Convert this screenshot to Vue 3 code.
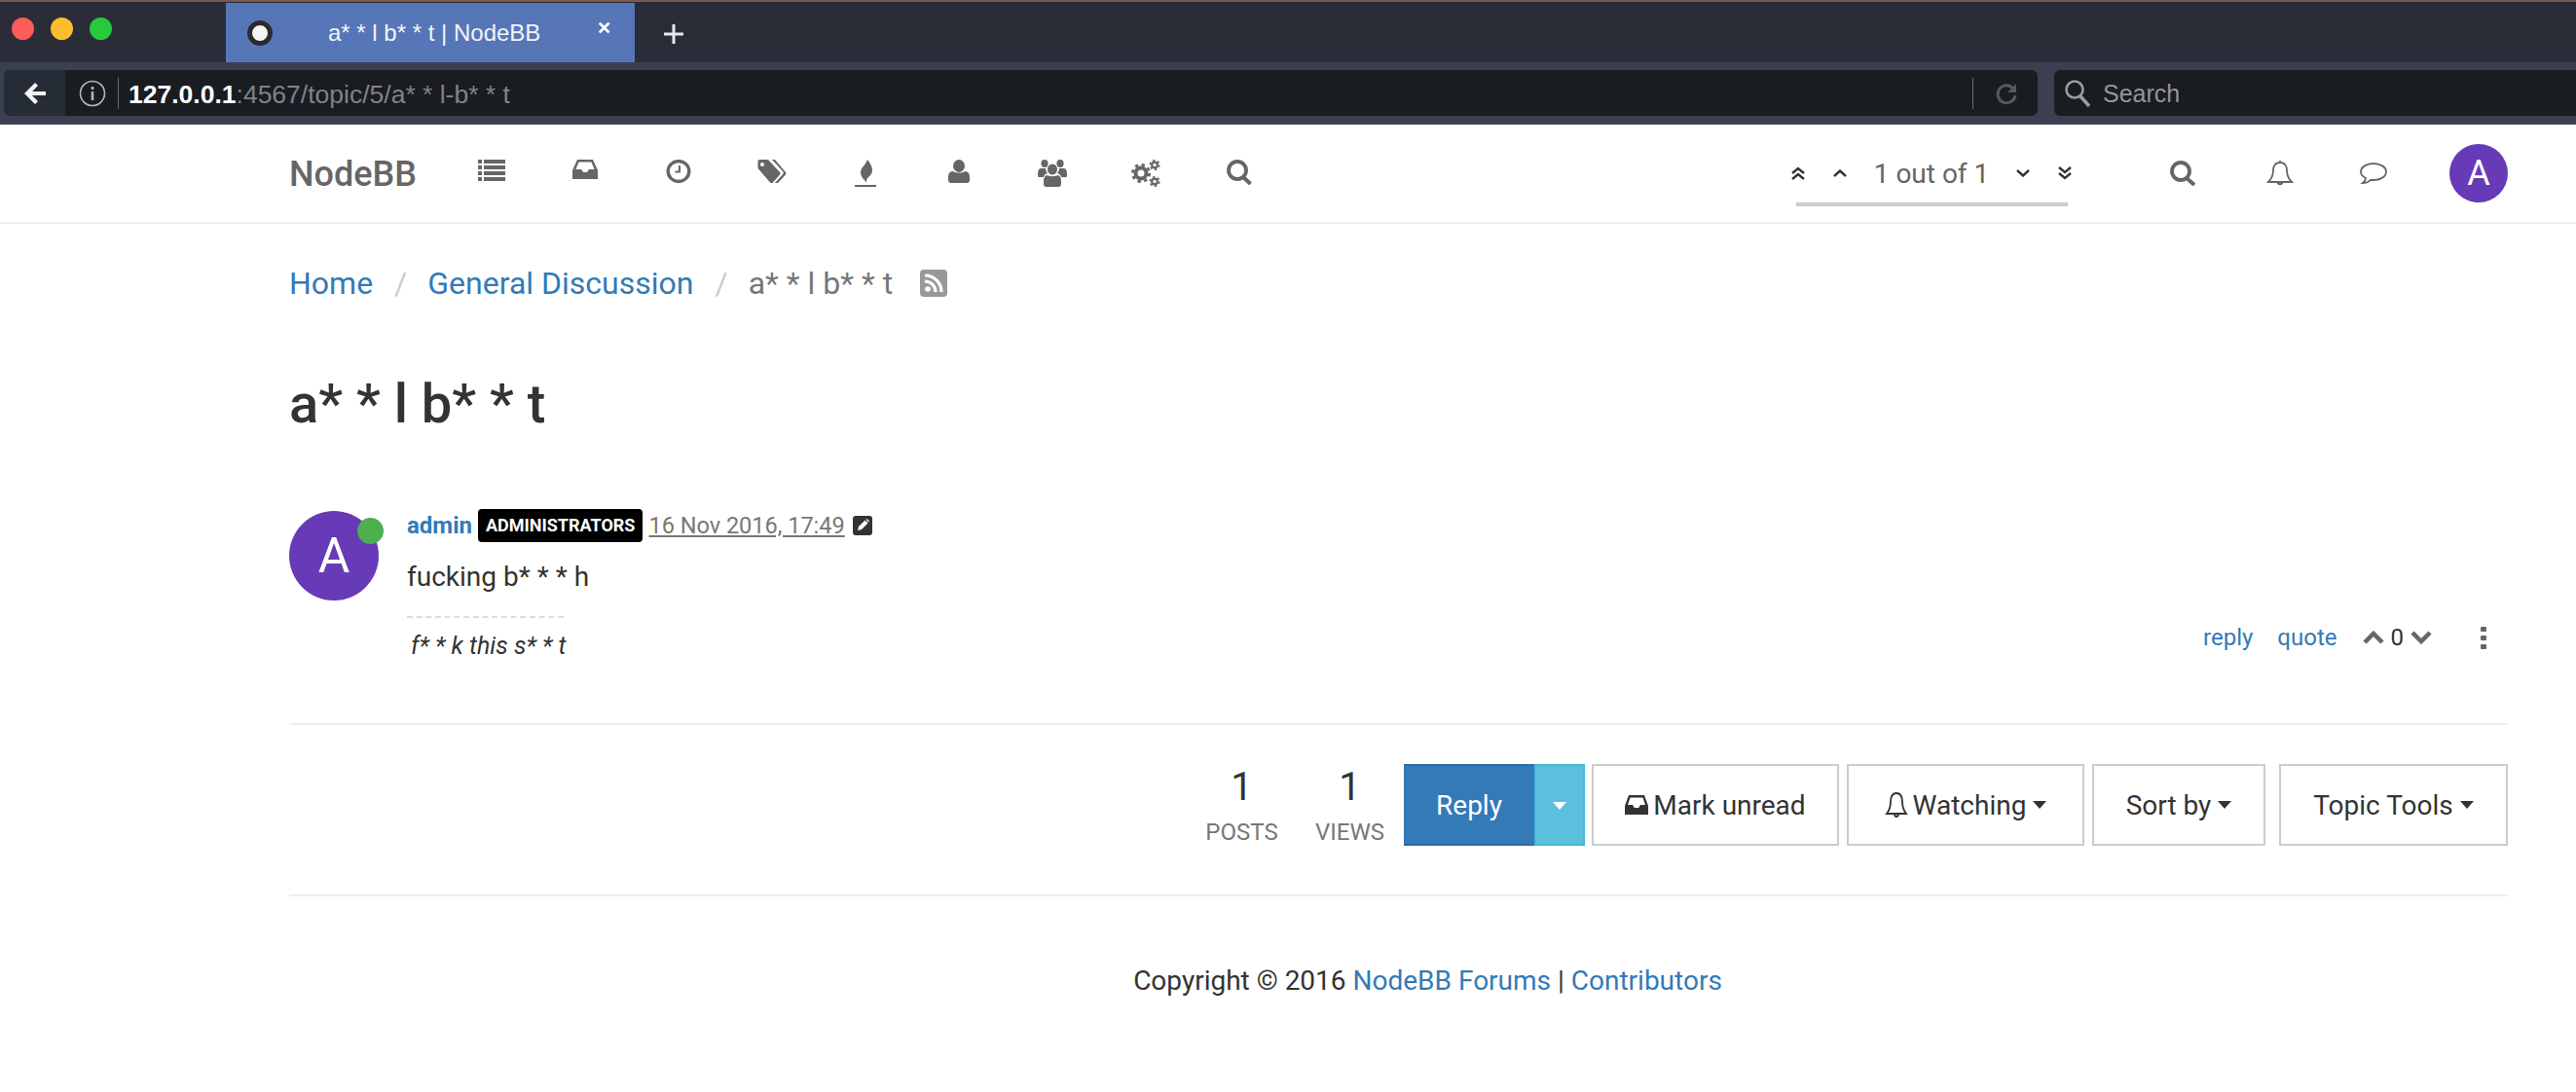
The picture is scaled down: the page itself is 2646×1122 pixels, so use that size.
<script setup>
const navIcons = ['list', 'inbox', 'clock', 'tags', 'fire', 'user', 'users', 'cogs', 'search']
const tools = [
  { label: 'Watching', icon: 'bell', cls: 'tool-watch' },
  { label: 'Sort by', icon: '', cls: 'tool-sort' },
  { label: 'Topic Tools', icon: '', cls: 'tool-topic' }
]
</script>

<template>
  <div class="window">
    <div class="tabbar">
      <div class="lights">
        <span class="light red"></span>
        <span class="light yellow"></span>
        <span class="light green"></span>
      </div>
      <div class="tab">
        <span class="favicon"></span>
        <span class="tab-title">a* * l b* * t | NodeBB</span>
        <span class="tab-close">✕</span>
      </div>
      <svg class="new-tab" width="22" height="22" viewBox="0 0 22 22"><path d="M11 1v20M1 11h20" stroke="#e8e8e8" stroke-width="3" /></svg>
    </div>
    <div class="toolbar">
      <div class="urlbar">
        <div class="back">
          <svg width="26" height="26" viewBox="0 0 26 26"><path d="M13 2 2 13l11 11 3-3-6-6h14v-4H10l6-6z" fill="#f2f2f2" /></svg>
        </div>
        <svg class="info" width="28" height="28" viewBox="0 0 28 28">
          <circle cx="14" cy="14" r="12.5" fill="none" stroke="#b5b7ba" stroke-width="1.6" />
          <path d="M14 12v9M14 7v3" stroke="#b5b7ba" stroke-width="2.6" />
        </svg>
        <span class="bar-sep"></span>
        <span class="url"><b>127.0.0.1</b>:4567/topic/5/a* * l-b* * t</span>
        <span class="bar-sep end"></span>
        <svg class="reload" width="24" height="24" viewBox="0 0 24 24">
          <path d="M19 7a9 9 0 1 0 2 7" fill="none" stroke="#55585c" stroke-width="3" />
          <path d="M22 2v9h-9z" fill="#55585c" />
        </svg>
      </div>
      <div class="searchbar">
        <svg width="28" height="30" viewBox="0 0 28 30">
          <circle cx="11" cy="11" r="8.5" fill="none" stroke="#9a9c9f" stroke-width="2.6" />
          <path d="m17 18 9 10" stroke="#9a9c9f" stroke-width="3.4" />
        </svg>
        <span class="search-text">Search</span>
      </div>
    </div>

    <header class="nav">
      <span class="brand">NodeBB</span>
      <ul class="nav-icons">
        <li v-for="name in navIcons" :key="name">
          <svg v-if="name === 'list'" width="28" height="22" viewBox="0 0 28 22" class="ico">
            <path d="M0 0h4v4H0zM6 0h22v4H6zM0 6h4v4H0zM6 6h22v4H6zM0 12h4v4H0zM6 12h22v4H6zM0 18h4v4H0zM6 18h22v4H6z" />
          </svg>
          <svg v-else-if="name === 'inbox'" width="26" height="20" viewBox="0 0 26 20" class="ico">
            <path d="M5 0h16l5 11v9H0v-9zm1.6 2.6L3.4 10h5.8l1.8 3h4l1.8-3h5.800l-3.200-7.400z" fill-rule="evenodd" />
          </svg>
          <svg v-else-if="name === 'clock'" width="26" height="24" viewBox="0 0 26 24" class="ico">
            <ellipse cx="13" cy="12" rx="10.800" ry="10.400" fill="none" stroke="#666" stroke-width="3.400" />
            <path d="M15 6v7.600H9.500v-2H13V6z" />
          </svg>
          <svg v-else-if="name === 'tags'" width="30" height="24" viewBox="0 0 30 24" class="ico">
            <path d="M2 0h9l12 13q1 1 0 2.500L15.500 24q-1 .5-2 0L.5 9V2Q.5 0 2 0zm3 3a2 2 0 1 0 .01 0z" fill-rule="evenodd" />
            <path d="M15 0h3l11 13q1 1 0 2.500L21 24h-3l8.500-9.500q.5-1 0-2z" />
          </svg>
          <svg v-else-if="name === 'fire'" width="22" height="28" viewBox="0 0 22 28" class="ico">
            <path d="M13 0c3 4 5 7 5 11 0 4-3 6-5 8-1 2-1 3-1 5-1-3-6-5-6-11 0-5 5-7 7-13z" />
            <rect y="26" width="22" height="2" />
          </svg>
          <svg v-else-if="name === 'user'" width="22" height="24" viewBox="0 0 22 24" class="ico">
            <ellipse cx="11" cy="6.500" rx="6" ry="6.500" />
            <path d="M5 12c2 2 10 2 12 0 3 0 5 2 5 6v3c0 2-1 3-3 3H3c-2 0-3-1-3-3v-3c0-4 2-6 5-6z" />
          </svg>
          <svg v-else-if="name === 'users'" width="30" height="28" viewBox="0 0 30 28" class="ico">
            <ellipse cx="7" cy="4" rx="3.600" ry="4" />
            <ellipse cx="23" cy="4" rx="3.600" ry="4" />
            <ellipse cx="15" cy="10" rx="5" ry="5.500" />
            <path d="M3 9h5c0 2 1 4 2 5-3 1-3.500 2-4 4H1c-1 0-1-1-1-3 0-3 1-6 3-6zM22 9h5c2 0 3 3 3 6 0 2 0 3-1 3h-5c-.5-2-1-3-4-4 1-1 2-3 2-5z" />
            <path d="M9 16c3 1.500 9 1.500 12 0 2 1 3 3 3 6v3c0 2-1 3-3 3H9c-2 0-3-1-3-3v-3c0-3 1-5 3-6z" />
          </svg>
          <svg v-else-if="name === 'cogs'" width="30" height="28" viewBox="0 0 30 28" class="ico">
            <circle cx="10" cy="14" r="5.500" fill="none" stroke="#666" stroke-width="4" />
            <circle cx="10" cy="14" r="8.600" fill="none" stroke="#666" stroke-width="2.800" stroke-dasharray="3.400 3.400" />
            <circle cx="24" cy="5.500" r="2.800" fill="none" stroke="#666" stroke-width="2.200" />
            <circle cx="24" cy="5.500" r="4.700" fill="none" stroke="#666" stroke-width="1.800" stroke-dasharray="2.400 2.500" />
            <circle cx="24" cy="22.500" r="2.800" fill="none" stroke="#666" stroke-width="2.200" />
            <circle cx="24" cy="22.500" r="4.700" fill="none" stroke="#666" stroke-width="1.800" stroke-dasharray="2.400 2.500" />
          </svg>
          <svg v-else width="26" height="26" viewBox="0 0 26 26" class="ico">
            <circle cx="11" cy="11" r="9" fill="none" stroke="#666" stroke-width="3.800" />
            <path d="m17 18 7.500 7" stroke="#666" stroke-width="4" />
          </svg>
        </li>
      </ul>
      <div class="nav-right">
        <div class="pager">
          <div class="pager-row">
            <svg width="16" height="14" viewBox="0 0 16 14" class="chev"><path d="m2 7 6-5 6 5M2 13l6-5 6 5" /></svg>
            <svg width="16" height="8" viewBox="0 0 16 8" class="chev up"><path d="m2 7 6-5.500L14 7" /></svg>
            <span class="pager-text">1 out of 1</span>
            <svg width="16" height="8" viewBox="0 0 16 8" class="chev down"><path d="m2 1 6 5.500L14 1" /></svg>
            <svg width="16" height="14" viewBox="0 0 16 14" class="chev"><path d="m2 1 6 5 6-5M2 7l6 5 6-5" /></svg>
          </div>
          <div class="pager-bar"></div>
        </div>
        <svg class="nav-search ico" width="28" height="26" viewBox="0 0 28 26">
          <circle cx="12" cy="11" r="9" fill="none" stroke="#666" stroke-width="3.800" />
          <path d="m18 18 8 7" stroke="#666" stroke-width="4" />
        </svg>
        <svg class="nav-bell" width="28" height="28" viewBox="0 0 28 28">
          <path d="M14 3c-5 0-7 4-7 8 0 5-1 8-5 12h24c-4-4-5-7-5-12 0-4-2-8-7-8zM14 1v2M11.500 23c0 3 5 3 5 0" fill="none" stroke="#666" stroke-width="1.800" />
        </svg>
        <svg class="nav-chat" width="30" height="24" viewBox="0 0 30 24">
          <path d="M15 2c7 0 13 3.500 13 8.500S22 19 15 19c-1 0-2 0-3-.200C10 21 7 22 4 22c2-1.500 3-3 3-5C4 15.500 2 13 2 10.500 2 5.500 8 2 15 2z" fill="none" stroke="#666" stroke-width="1.800" />
        </svg>
        <div class="avatar small">A</div>
      </div>
    </header>

    <main class="page">
      <nav class="crumbs">
        <a>Home</a>
        <span class="slash">/</span>
        <a>General Discussion</a>
        <span class="slash">/</span>
        <span class="crumb-current">a* * l b* * t</span>
        <svg class="rss" width="28" height="28" viewBox="0 0 28 28">
          <rect width="28" height="28" rx="4" fill="#999" />
          <circle cx="8" cy="20" r="2.800" fill="#fff" />
          <path d="M5 12a11 11 0 0 1 11 11M5 6a17 17 0 0 1 17 17" fill="none" stroke="#fff" stroke-width="3.200" />
        </svg>
      </nav>

      <h1 class="title">a* * l b* * t</h1>

      <article class="post">
        <div class="post-avatar">
          <div class="avatar">A</div>
          <span class="status"></span>
        </div>
        <div class="post-main">
          <div class="post-head">
            <a class="author">admin</a>
            <span class="badge">ADMINISTRATORS</span>
            <a class="date">16 Nov 2016, 17:49</a>
            <svg width="20" height="20" viewBox="0 0 20 20">
              <rect width="20" height="20" rx="3" fill="#333" />
              <path d="m5 15 1-4 6.500-6.500 3 3L9 14zM13.500 3.800l1-.800 2.500 2.500-1 1z" fill="#fff" />
            </svg>
          </div>
          <p class="post-body">fucking b* * * h</p>
          <div class="signature">f* * k this s* * t</div>
        </div>
        <div class="post-actions">
          <a>reply</a>
          <a>quote</a>
          <div class="votes">
            <svg width="22" height="14" viewBox="0 0 22 14"><path d="m2 12 9-9 9 9" fill="none" stroke="#666" stroke-width="4.500" /></svg>
            <span>0</span>
            <svg width="22" height="14" viewBox="0 0 22 14"><path d="m2 2 9 9 9-9" fill="none" stroke="#666" stroke-width="4.500" /></svg>
          </div>
          <div class="kebab"><i></i><i></i><i></i></div>
        </div>
      </article>

      <section class="topic-bar">
        <div class="stat"><b>1</b><span>POSTS</span></div>
        <div class="stat views"><b>1</b><span>VIEWS</span></div>
        <div class="reply-group">
          <button class="reply">Reply</button>
          <button class="reply-caret"><span class="caret"></span></button>
        </div>
        <button class="tool tool-mark">
          <svg width="24" height="20" viewBox="0 0 24 20">
            <path d="M4 0h16l4 11v9H0v-9zm1.500 2.600L3 10h5l1.800 3h4.400L16 10h5l-2.500-7.400z" fill="#333" fill-rule="evenodd" />
          </svg>
          Mark unread
        </button>
        <button v-for="t in tools" :key="t.label" class="tool" :class="t.cls">
          <svg v-if="t.icon === 'bell'" width="24" height="28" viewBox="0 0 24 28">
            <path d="M12 2C7 2 6 7 6 11c0 5-1 8-4 12h20c-3-4-4-7-4-12 0-4-1-9-6-9zM10 23c0 4 4 4 4 0" fill="none" stroke="#333" stroke-width="1.800" />
          </svg>
          {{ t.label }}
          <span class="caret dark"></span>
        </button>
      </section>

      <footer class="copy">Copyright © 2016 <a>NodeBB Forums</a> | <a>Contributors</a></footer>
    </main>
  </div>
</template>

<style>
html, body { margin: 0; background: #fff; }
</style>

<style scoped>
.window {
  width: 2646px;
  height: 1122px;
  overflow: hidden;
  font-family: Roboto, "Liberation Sans", sans-serif;
  color: #333;
  background: #fff;
}
a { color: #337ab7; }

.tabbar {
  height: 62px;
  display: flex;
  align-items: stretch;
  background: #2a2d38;
  border-top: 2px solid #7d5552;
}
.lights { width: 232px; display: flex; gap: 17px; padding: 16px 0 0 12px; box-sizing: border-box; }
.light { width: 23px; height: 23px; border-radius: 50%; }
.red { background: #fc5b57; }
.yellow { background: #fdbc2e; }
.green { background: #27c93f; }
.tab {
  width: 420px;
  margin-top: 1px;
  display: flex;
  align-items: center;
  position: relative;
  background: #5676b7;
  color: #f2f4f8;
  font-family: "Liberation Sans", sans-serif;
  font-size: 24px;
}
.favicon {
  width: 16px;
  height: 16px;
  margin-left: 22px;
  border-radius: 50%;
  background: #f4f4f4;
  border: 5px solid #2a2a2e;
}
.tab-title { margin-left: 57px; }
.tab-close { position: absolute; left: 381px; top: 15px; font-size: 18px; font-weight: 700; color: #fff; }
.new-tab { align-self: center; margin-left: 29px; margin-top: 4px; }

.toolbar {
  height: 64px;
  display: flex;
  gap: 17px;
  padding: 8px 0 9px 4px;
  box-sizing: border-box;
  background: #3a404f;
}
.urlbar {
  width: 2089px;
  display: flex;
  align-items: center;
  background: #191c21;
  border-radius: 6px;
  overflow: hidden;
  font-family: "Liberation Sans", sans-serif;
}
.back {
  width: 63px;
  height: 100%;
  display: flex;
  align-items: center;
  justify-content: center;
  background: #252c36;
  flex: none;
}
.info { margin-left: 14px; flex: none; }
.bar-sep { width: 1px; height: 32px; background: #6a6d70; margin-left: 12px; flex: none; }
.bar-sep.end { margin-left: auto; }
.url { margin: 3px 0 0 10px; font-size: 26.5px; color: #808387; }
.url b { color: #fff; font-weight: 700; }
.reload { margin: 0 20px 0 22px; }
.searchbar {
  flex: 1;
  display: flex;
  align-items: center;
  gap: 12px;
  padding-left: 10px;
  background: #191c21;
  border-radius: 6px 0 0 6px;
  color: #94969a;
  font-family: "Liberation Sans", sans-serif;
  font-size: 25px;
}
.search-text { margin-top: 2px; }

.nav {
  height: 100px;
  display: flex;
  align-items: center;
  padding: 0 70px 0 297px;
  border-bottom: 2px solid #eee;
}
.brand { width: 160px; margin-top: 2px; font-size: 36px; font-weight: 500; color: #666; }
.nav-icons { list-style: none; margin: 0; padding: 0; display: flex; }
.nav-icons li { width: 96px; display: flex; justify-content: center; }
.ico { fill: #666; display: block; }
.nav-right { margin-left: auto; display: flex; align-items: center; }
.pager { position: relative; width: 290px; }
.pager-row { display: flex; align-items: center; }
.chev { fill: none; stroke: #333; stroke-width: 2.400; flex: none; }
.chev.up { margin-left: 27px; }
.chev.down { margin-right: 27px; }
.pager-text { width: 172px; text-align: center; font-size: 28px; color: #666; }
.pager-bar { position: absolute; left: 6px; top: 46px; width: 279px; height: 4px; background: #ccc; }
.nav-search { margin-left: 99px; }
.nav-bell { margin-left: 72px; }
.nav-chat { margin-left: 67px; }
.avatar {
  width: 92px;
  height: 92px;
  border-radius: 50%;
  background: #673ab7;
  color: #fff;
  display: flex;
  align-items: center;
  justify-content: center;
  font-size: 50px;
}
.avatar.small { width: 60px; height: 60px; font-size: 36px; margin-left: 63px; }

.page { padding: 0 70px 0 297px; }
.crumbs {
  display: flex;
  align-items: center;
  height: 38px;
  margin-top: 42px;
  font-size: 32px;
}
.slash { color: #ccc; margin: 0 21px 0 22px; }
.crumb-current { color: #777; }
.rss { margin-left: 28px; }
.title {
  margin: 72px 0 0;
  font-size: 56px;
  line-height: 66px;
  font-weight: 500;
  color: #333;
}

.post {
  display: flex;
  margin-top: 77px;
  padding-bottom: 65px;
  border-bottom: 2px solid #eee;
  position: relative;
}
.post-avatar { position: relative; width: 121px; flex: none; }
.status {
  position: absolute;
  left: 70px;
  top: 7px;
  width: 27px;
  height: 27px;
  border-radius: 50%;
  background: #4caf50;
}
.post-head { display: flex; align-items: center; height: 34px; margin-top: -2px; gap: 6px; }
.author { font-size: 24px; font-weight: 700; }
.badge {
  background: #000;
  color: #fff;
  border-radius: 4px;
  font-size: 18px;
  font-weight: 700;
  padding: 0 8px;
  line-height: 34px;
}
.date { color: #777; font-size: 23.5px; text-decoration: underline; margin-right: 2px; }
.post-body { margin: 19px 0 0; font-size: 28px; line-height: 34px; color: #333; }
.signature {
  margin-top: 23px;
  width: 161px;
  border-top: 2px dashed #ddd;
  padding-top: 14px;
  font-size: 25px;
  line-height: 29px;
  font-style: italic;
  white-space: nowrap;
  text-indent: 4px;
}
.post-actions {
  margin-left: auto;
  display: flex;
  align-items: center;
  align-self: flex-start;
  margin-top: 113px;
  height: 34px;
  font-size: 24px;
  padding-right: 22px;
}
.post-actions a:nth-child(2) { margin-left: 25px; }
.votes { display: flex; align-items: center; gap: 7px; margin-left: 26px; }
.kebab { display: flex; flex-direction: column; gap: 4px; margin-left: 50px; }
.kebab i { width: 6px; height: 5px; border-radius: 1px; background: #666; display: block; }

.topic-bar {
  display: flex;
  justify-content: flex-end;
  align-items: stretch;
  height: 84px;
  padding: 40px 0 50px;
  border-bottom: 2px solid #eee;
  gap: 8px;
}
.stat { width: 73px; display: flex; flex-direction: column; align-items: center; }
.stat.views { margin: 0 12px 0 31px; width: 71px; }
.stat b { font-size: 40px; font-weight: 400; line-height: 47px; margin-top: 0; }
.stat span { font-size: 24px; color: #777; line-height: 28px; margin-top: 9px; }
button { font-family: inherit; cursor: pointer; box-sizing: border-box; }
.reply-group { display: flex; margin-right: -1px; }
.reply {
  width: 134px;
  border: 2px solid #2e6da4;
  border-width: 2px 0;
  background: #337ab7;
  color: #fff;
  font-size: 28px;
}
.reply-caret { width: 52px; border: 2px solid #46b8da; background: #5bc0de; padding: 0; }
.caret {
  display: inline-block;
  border-left: 7px solid transparent;
  border-right: 7px solid transparent;
  border-top: 8px solid #fff;
  vertical-align: middle;
}
.caret.dark { border-top-color: #333; margin-left: 2px; }
.tool {
  border: 2px solid #ccc;
  background: #fff;
  color: #333;
  font-size: 28px;
  display: flex;
  align-items: center;
  justify-content: center;
  gap: 5px;
  padding: 0;
}
.tool-mark { width: 254px; }
.tool-watch { width: 244px; }
.tool-sort { width: 178px; }
.tool-topic { width: 235px; margin-left: 6px; }

.copy { margin-top: 70px; text-align: center; font-size: 28px; line-height: 34px; color: #333; padding-left: 60px; }
</style>
